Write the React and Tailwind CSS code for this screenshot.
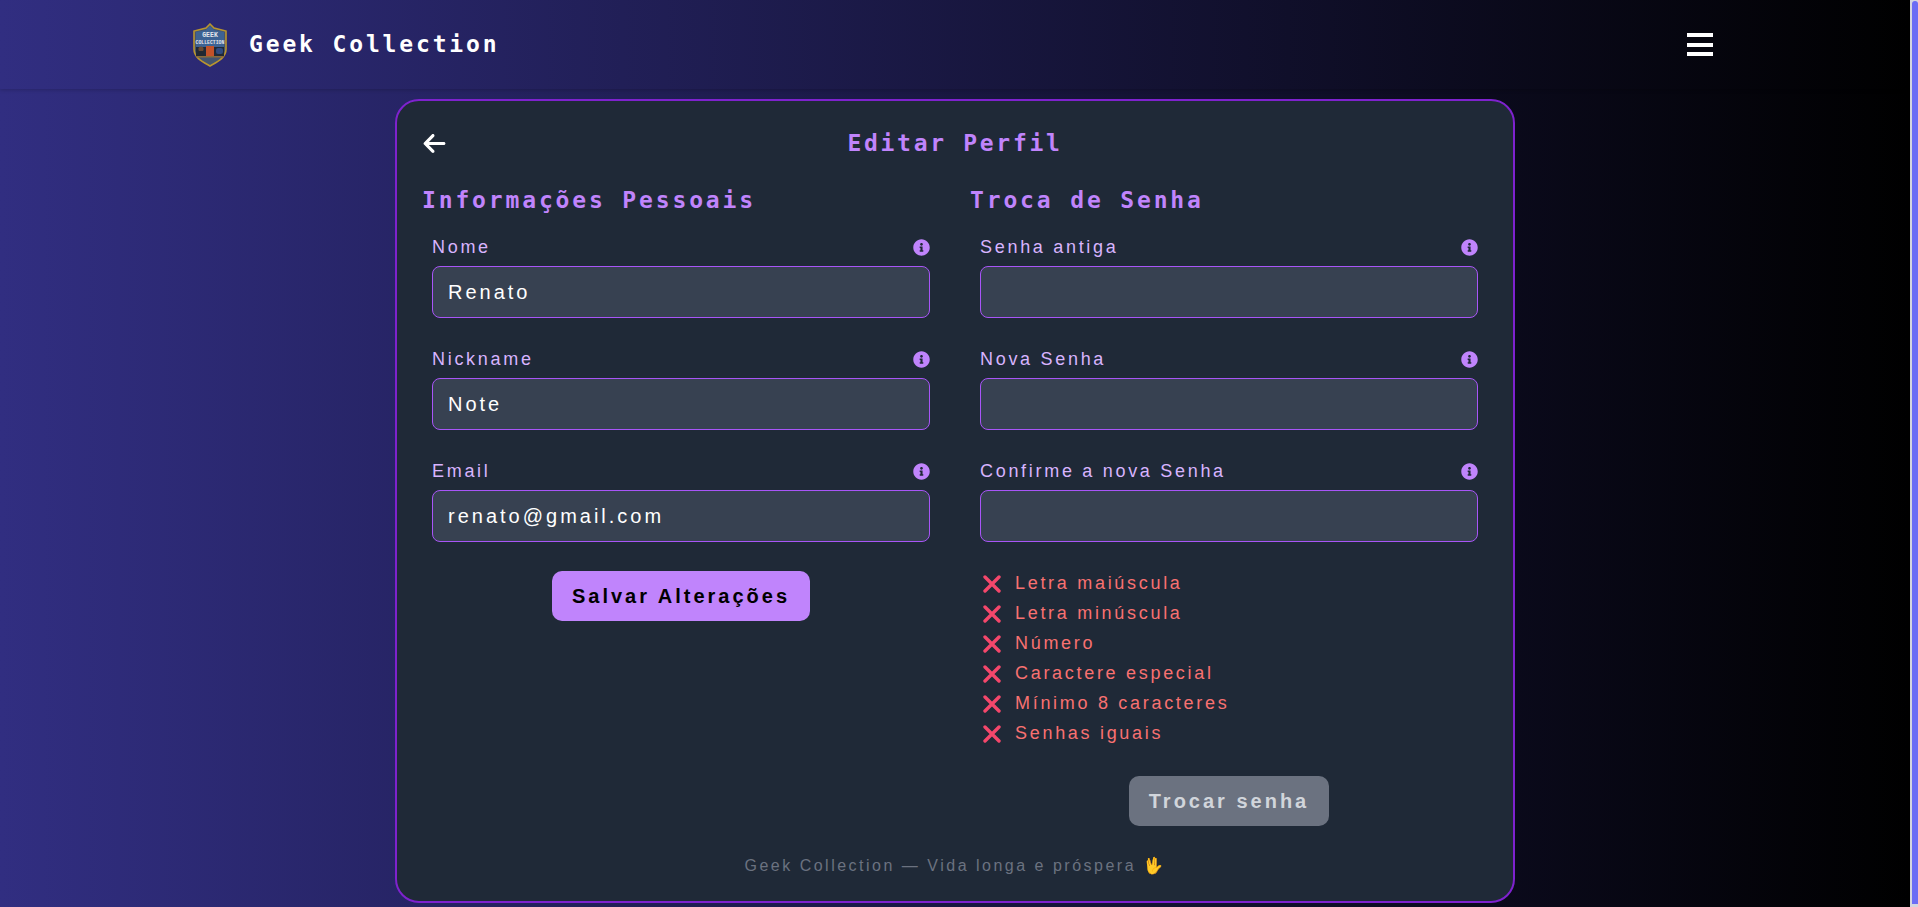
import { FaInfoCircle } from "react-icons/fa";
import { FaArrowLeft } from "react-icons/fa6";

const mono = "font-['DejaVu_Sans_Mono','Liberation_Mono',monospace]";
const sans = "font-['Liberation_Sans',Arial,sans-serif]";

const personal = [
  { label: "Nome", value: "Renato" },
  { label: "Nickname", value: "Note" },
  { label: "Email", value: "renato@gmail.com" },
];

const password = [
  { label: "Senha antiga", value: "" },
  { label: "Nova Senha", value: "" },
  { label: "Confirme a nova Senha", value: "" },
];

const rules = [
  "Letra maiúscula",
  "Letra minúscula",
  "Número",
  "Caractere especial",
  "Mínimo 8 caracteres",
  "Senhas iguais",
];

function Logo() {
  return (
    <svg width="34" height="44" viewBox="0 0 34 44" className="shrink-0">
      <path d="M17 1 L21 5 L33 8 L33 26 C33 35 24 39 17 43 C10 39 1 35 1 26 L1 8 L13 5 Z" fill="#44546e" stroke="#b9952e" strokeWidth="1.6" />
      <path d="M3 9 L13 7 L17 3 L21 7 L31 9 L31 25 L3 25 Z" fill="#3d6293" />
      <rect x="3" y="24" width="28" height="9" fill="#1f2937" />
      <rect x="13" y="23" width="8" height="10" fill="#c2522a" />
      <circle cx="8" cy="26" r="2.6" fill="#6b4a32" />
      <rect x="5" y="28" width="6" height="5" fill="#222831" />
      <rect x="23" y="25" width="7" height="6" rx="2" fill="#2f4a80" />
      <rect x="3" y="33" width="28" height="1.5" fill="#8a6a3a" />
      <text x="17" y="14" textAnchor="middle" fontSize="6.5" fontWeight="700" fill="#e5e7eb" fontFamily="Liberation Mono, monospace">GEEK</text>
      <text x="17" y="20.5" textAnchor="middle" fontSize="4.8" fontWeight="700" fill="#e5e7eb" fontFamily="Liberation Mono, monospace">COLLECTION</text>
    </svg>
  );
}

function CrossIcon() {
  return (
    <svg width="18" height="18" viewBox="0 0 18 18" className="shrink-0 ml-[3px]">
      <path d="M2 2 L16 16 M16 2 L2 16" stroke="#f4476b" strokeWidth="3.4" strokeLinecap="round" fill="none" />
    </svg>
  );
}

function Field({ label, value }) {
  return (
    <div className="px-[10px]">
      <div className="flex items-center justify-between h-[27px] mb-[5px]">
        <label className={`${sans} text-[18px] tracking-[2.7px] text-[#d8b4fe]`}>{label}</label>
        <FaInfoCircle className="text-[#c084fc] text-[17px]" />
      </div>
      <input
        readOnly
        value={value}
        className={`${sans} block w-full h-[52px] px-[15px] rounded-[8px] bg-[#374151] border border-[#a855f7] text-white text-[20px] tracking-[3px] outline-none`}
      />
    </div>
  );
}

export default function App() {
  return (
    <div className="flex h-[907px] overflow-hidden">
      <div className="flex-1 min-w-0 bg-linear-to-r/srgb from-[#312e81] to-black">
        <header className="h-[89px] flex items-center justify-between pl-[193px] pr-[197px] bg-linear-to-r/srgb from-[#312e81] to-black shadow-[0_1px_4px_rgba(0,0,0,0.2)]">
          <div className="flex items-center gap-[22px]">
            <Logo />
            <span className={`${mono} text-white font-bold text-[23px] tracking-[2.85px]`}>Geek Collection</span>
          </div>
          <div className="flex flex-col gap-[5.5px] w-[26px]">
            <span className="h-[4px] bg-white" />
            <span className="h-[4px] bg-white" />
            <span className="h-[4px] bg-white" />
          </div>
        </header>

        <main className="w-[1120px] h-[804px] ml-[395px] mt-[10px] rounded-[24px] border-2 border-[#7e22ce] bg-[#1f2937] px-[25px] pt-[26px]">
          <div className="relative flex items-center justify-center h-[32px]">
            <FaArrowLeft className="absolute left-0 text-white text-[25px]" />
            <h1 className={`${mono} font-bold text-[23px] tracking-[2.7px] text-[#c084fc]`}>Editar Perfil</h1>
          </div>

          <div className="grid grid-cols-2 gap-x-[30px] mt-[27px]">
            <section>
              <h2 className={`${mono} font-bold text-[23px] leading-[28px] tracking-[2.85px] text-[#c084fc] h-[28px] mb-[20px]`}>Informações Pessoais</h2>
              <div className="flex flex-col gap-[28px]">
                {personal.map((f) => (
                  <Field key={f.label} {...f} />
                ))}
              </div>
              <div className="flex justify-center mt-[29px]">
                <button className={`${sans} h-[50px] px-[20px] rounded-[10px] bg-[#c084fc] text-black font-bold text-[20px] tracking-[3px]`}>
                  Salvar Alterações
                </button>
              </div>
            </section>

            <section>
              <h2 className={`${mono} font-bold text-[23px] leading-[28px] tracking-[2.85px] text-[#c084fc] h-[28px] mb-[20px]`}>Troca de Senha</h2>
              <div className="flex flex-col gap-[28px]">
                {password.map((f) => (
                  <Field key={f.label} {...f} />
                ))}
              </div>
              <ul className="mt-[28px] px-[10px] flex flex-col gap-[3px]">
                {rules.map((r) => (
                  <li key={r} className={`${sans} flex items-center gap-[14px] h-[27px] text-[18px] tracking-[2.7px] text-[#f87171]`}>
                    <CrossIcon />
                    {r}
                  </li>
                ))}
              </ul>
              <div className="flex justify-center mt-[29px]">
                <button className={`${sans} h-[50px] px-[20px] rounded-[10px] bg-[#6b7280] text-[#d1d5db] font-bold text-[20px] tracking-[3px]`}>
                  Trocar senha
                </button>
              </div>
            </section>
          </div>

          <p className={`${sans} text-center text-[16px] leading-[24px] tracking-[2.5px] text-[#6b7280] mt-[28px]`}>
            Geek Collection — Vida longa e próspera 🖖
          </p>
        </main>
      </div>

      <div className="w-[8px] shrink-0 pl-[2px] bg-[#d5d5e0]">
        <div className="h-[903px] mt-[1px] rounded-t-[3px] bg-[#6c6cf5]" />
      </div>
    </div>
  );
}
